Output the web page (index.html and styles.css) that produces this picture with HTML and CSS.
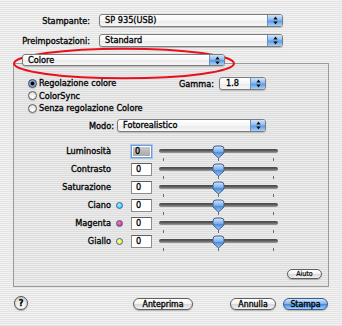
FILE: index.html
```html
<!DOCTYPE html>
<html lang="it">
<head>
<meta charset="utf-8">
<title>Stampa</title>
<link rel="stylesheet" href="styles.css">
</head>
<body>
<div class="dialog">
  <div class="field-row">
    <span class="lbl">Stampante:</span>
    <div class="popup w-printer"><span class="ptext">SP 935(USB)</span><span class="arrows"><svg width="5" height="9" viewBox="0 0 5 9"><path d="M0.3 3.6 L2.5 0.6 L4.7 3.6 Z M0.3 5.4 L4.7 5.4 L2.5 8.4 Z"/></svg></span></div>
  </div>
  <div class="field-row">
    <span class="lbl">Preimpostazioni:</span>
    <div class="popup w-printer"><span class="ptext">Standard</span><span class="arrows"><svg width="5" height="9" viewBox="0 0 5 9"><path d="M0.3 3.6 L2.5 0.6 L4.7 3.6 Z M0.3 5.4 L4.7 5.4 L2.5 8.4 Z"/></svg></span></div>
  </div>
  <div class="panel-row">
    <div class="popup w-panel"><span class="ptext">Colore</span><span class="arrows"><svg width="5" height="9" viewBox="0 0 5 9"><path d="M0.3 3.6 L2.5 0.6 L4.7 3.6 Z M0.3 5.4 L4.7 5.4 L2.5 8.4 Z"/></svg></span></div>
  </div>
  <div class="group">
    <div class="color-top">
      <div class="radios">
        <div class="radio"><span class="rb on"></span>Regolazione colore</div>
        <div class="radio"><span class="rb"></span>ColorSync</div>
        <div class="radio"><span class="rb"></span>Senza regolazione Colore</div>
      </div>
      <div class="gamma">
        <span>Gamma:</span>
        <div class="popup w-gamma"><span class="ptext">1.8</span><span class="arrows"><svg width="5" height="9" viewBox="0 0 5 9"><path d="M0.3 3.6 L2.5 0.6 L4.7 3.6 Z M0.3 5.4 L4.7 5.4 L2.5 8.4 Z"/></svg></span></div>
      </div>
    </div>
    <div class="mode-row">
      <span class="mode-lbl">Modo:</span>
      <div class="popup w-mode"><span class="ptext">Fotorealistico</span><span class="arrows"><svg width="5" height="9" viewBox="0 0 5 9"><path d="M0.3 3.6 L2.5 0.6 L4.7 3.6 Z M0.3 5.4 L4.7 5.4 L2.5 8.4 Z"/></svg></span></div>
    </div>
    <div class="sliders">
      <div class="srow"><span class="slbl">Luminosità</span><span class="dotslot"></span><span class="tf focus"><span class="sel">0</span></span><div class="slider"><span class="track"></span><span class="tick t1"></span><span class="tick t2"></span><span class="tick t3"></span><svg class="thumb" width="13" height="14" viewBox="0 0 13 14"><defs><linearGradient id="tg" x1="0" y1="0" x2="0" y2="1"><stop offset="0" stop-color="#d6e8fb"/><stop offset="0.45" stop-color="#7fb0ea"/><stop offset="0.55" stop-color="#4d8ddb"/><stop offset="1" stop-color="#a6cdf5"/></linearGradient></defs><path d="M1 4 Q1 1 4 1 L9 1 Q12 1 12 4 L12 8 L6.5 13 L1 8 Z" fill="url(#tg)" stroke="#3f5f8f" stroke-width="1"/></svg></div></div>
      <div class="srow"><span class="slbl">Contrasto</span><span class="dotslot"></span><span class="tf">0</span><div class="slider"><span class="track"></span><span class="tick t1"></span><span class="tick t2"></span><span class="tick t3"></span><svg class="thumb" width="13" height="14" viewBox="0 0 13 14"><path d="M1 4 Q1 1 4 1 L9 1 Q12 1 12 4 L12 8 L6.5 13 L1 8 Z" fill="url(#tg)" stroke="#3f5f8f" stroke-width="1"/></svg></div></div>
      <div class="srow"><span class="slbl">Saturazione</span><span class="dotslot"></span><span class="tf">0</span><div class="slider"><span class="track"></span><span class="tick t1"></span><span class="tick t2"></span><span class="tick t3"></span><svg class="thumb" width="13" height="14" viewBox="0 0 13 14"><path d="M1 4 Q1 1 4 1 L9 1 Q12 1 12 4 L12 8 L6.5 13 L1 8 Z" fill="url(#tg)" stroke="#3f5f8f" stroke-width="1"/></svg></div></div>
      <div class="srow"><span class="slbl">Ciano</span><span class="dotslot"><span class="dot cyan"></span></span><span class="tf">0</span><div class="slider"><span class="track"></span><span class="tick t1"></span><span class="tick t2"></span><span class="tick t3"></span><svg class="thumb" width="13" height="14" viewBox="0 0 13 14"><path d="M1 4 Q1 1 4 1 L9 1 Q12 1 12 4 L12 8 L6.5 13 L1 8 Z" fill="url(#tg)" stroke="#3f5f8f" stroke-width="1"/></svg></div></div>
      <div class="srow"><span class="slbl">Magenta</span><span class="dotslot"><span class="dot magenta"></span></span><span class="tf">0</span><div class="slider"><span class="track"></span><span class="tick t1"></span><span class="tick t2"></span><span class="tick t3"></span><svg class="thumb" width="13" height="14" viewBox="0 0 13 14"><path d="M1 4 Q1 1 4 1 L9 1 Q12 1 12 4 L12 8 L6.5 13 L1 8 Z" fill="url(#tg)" stroke="#3f5f8f" stroke-width="1"/></svg></div></div>
      <div class="srow"><span class="slbl">Giallo</span><span class="dotslot"><span class="dot yellow"></span></span><span class="tf">0</span><div class="slider"><span class="track"></span><span class="tick t1"></span><span class="tick t2"></span><span class="tick t3"></span><svg class="thumb" width="13" height="14" viewBox="0 0 13 14"><path d="M1 4 Q1 1 4 1 L9 1 Q12 1 12 4 L12 8 L6.5 13 L1 8 Z" fill="url(#tg)" stroke="#3f5f8f" stroke-width="1"/></svg></div></div>
    </div>
    <div class="help-row"><span class="btn small">Aiuto</span></div>
  </div>
  <div class="bottom">
    <span class="helpbtn">?</span>
    <span class="btn preview">Anteprima</span>
    <span class="btn cancel">Annulla</span>
    <span class="btn default">Stampa</span>
  </div>
  <svg class="annot" width="226" height="34" viewBox="0 0 226 34"><ellipse cx="112" cy="16.5" rx="110" ry="14.8" fill="none" stroke="#e8101c" stroke-width="2"/></svg>
</div>
</body>
</html>
```
FILE: styles.css
```css
html, body {
  margin: 0;
  padding: 0;
}
body {
  width: 342px;
  height: 326px;
  overflow: hidden;
  background: repeating-linear-gradient(to bottom, #f2f2f2 0, #f2f2f2 1px, #e3e3e3 1px, #e3e3e3 2px);
  font-family: "DejaVu Sans Condensed", "DejaVu Sans", sans-serif;
  font-stretch: condensed;
  font-size: 9.1px;
  color: #000;
  -webkit-text-stroke: 0.3px #000;
}
.dialog {
  position: relative;
  width: 342px;
  height: 326px;
  padding-top: 14px;
  box-sizing: border-box;
}
.field-row {
  display: flex;
  align-items: center;
  height: 13px;
  margin-bottom: 7px;
}
.lbl {
  width: 90px;
  text-align: right;
}
.popup {
  display: flex;
  align-items: stretch;
  box-sizing: border-box;
  height: 13px;
  border: 1px solid #7d7d7d;
  border-radius: 3px;
  background: linear-gradient(to bottom, #ffffff 0%, #f6f6f6 50%, #e9e9e9 51%, #f7f7f7 100%);
  box-shadow: 0 1px 1px rgba(0,0,0,0.2);
  overflow: hidden;
}
.ptext {
  flex: 1;
  padding-left: 5px;
  line-height: 11px;
  white-space: nowrap;
}
.arrows {
  width: 14px;
  display: flex;
  align-items: center;
  justify-content: center;
  border-left: 1px solid #6a8fc0;
  background: linear-gradient(to bottom, #d2e5fa 0%, #8dbbef 45%, #5d9be4 55%, #a8d2f8 100%);
}
.arrows svg path {
  fill: #111;
}
.w-printer {
  width: 184px;
  margin-left: 9px;
}
.panel-row {
  position: relative;
  z-index: 1;
  padding-left: 22px;
  margin-top: 2px;
}
.w-panel {
  width: 203px;
  height: 12px;
}
.w-panel .ptext {
  line-height: 10px;
}
.group {
  display: flex;
  flex-direction: column;
  box-sizing: border-box;
  width: 316px;
  height: 224px;
  margin: -3px 0 0 13px;
  border: 1px solid #9a9a9a;
  background: rgba(0,0,0,0.025);
}
.color-top {
  display: flex;
  align-items: flex-start;
  padding: 13px 0 0 14px;
}
.radios {
  width: 153px;
}
.radio {
  display: flex;
  align-items: center;
  height: 12.5px;
  white-space: nowrap;
}
.rb {
  box-sizing: border-box;
  width: 9px;
  height: 9px;
  margin-right: 2px;
  border-radius: 50%;
  border: 1px solid #5e5e5e;
  background: radial-gradient(circle at 50% 70%, #ffffff 0%, #e6e6e6 60%, #bdbdbd 100%);
  box-shadow: 0 1px 1px rgba(0,0,0,0.15);
}
.rb.on {
  border-color: #33465f;
  background: radial-gradient(circle, #000 0, #000 1.6px, #7c98c2 2.2px, #b7cbe6 100%);
}
.gamma {
  display: flex;
  align-items: center;
  margin-left: auto;
  margin-right: 62px;
}
.w-gamma {
  width: 47px;
  margin-left: 5px;
}
.w-gamma .ptext {
  padding-left: 6px;
}
.mode-row {
  display: flex;
  align-items: center;
  margin-top: 4.5px;
  padding-left: 14px;
}
.mode-lbl {
  width: 86px;
  text-align: right;
}
.w-mode {
  width: 149px;
  margin-left: 3px;
}
.sliders {
  margin-top: 12px;
  padding-left: 14px;
}
.srow {
  display: flex;
  align-items: flex-start;
  height: 18px;
}
.slbl {
  width: 83px;
  text-align: right;
  line-height: 13px;
  margin-top: 1px;
}
.dotslot {
  width: 20px;
  height: 14px;
  padding-left: 5px;
  box-sizing: border-box;
  display: flex;
  align-items: center;
}
.dot {
  box-sizing: border-box;
  width: 7px;
  height: 7px;
  border-radius: 50%;
  border: 1px solid #3e5f9c;
}
.cyan { background: radial-gradient(circle at 40% 35%, #9ff0ff, #11c3ef); }
.magenta { background: radial-gradient(circle at 40% 35%, #ff7ab8, #e0106d); }
.yellow { background: radial-gradient(circle at 40% 35%, #ffffa0, #f2ee00); }
.tf {
  box-sizing: border-box;
  width: 21px;
  height: 13px;
  margin-top: 1px;
  padding-left: 4px;
  line-height: 11px;
  background: #fff;
  border: 1px solid #8c8c8c;
  border-top-color: #5e5e5e;
}
.tf.focus {
  padding-left: 1px;
  padding-top: 1px;
  border: 1px solid #6f9bd6;
  box-shadow: 0 0 0 1px #a9c6ee;
}
.sel {
  display: block;
  width: 17px;
  height: 9px;
  line-height: 9px;
  padding-left: 2px;
  box-sizing: border-box;
  background: linear-gradient(to bottom, #c9c9c9, #a9a9a9);
}
.slider {
  position: relative;
  width: 119px;
  height: 18px;
  margin-left: 7px;
}
.track {
  position: absolute;
  left: 0;
  right: 0;
  top: 5px;
  height: 4px;
  border-radius: 2px;
  background: linear-gradient(to bottom, #444 0%, #626262 50%, #a0a0a0 100%);
}
.tick {
  position: absolute;
  top: 14px;
  width: 1px;
  height: 3px;
  background: #6c6c6c;
}
.t1 { left: 4px; }
.t2 { left: 59px; top: 13px; height: 4px; }
.t3 { left: 114px; }
.thumb {
  position: absolute;
  left: 53px;
  top: 1px;
}
.help-row {
  margin-top: auto;
  display: flex;
  justify-content: flex-end;
  padding: 0 6px 7px 0;
}
.btn {
  display: flex;
  align-items: center;
  justify-content: center;
  box-sizing: border-box;
  height: 12px;
  border: 1px solid #5f5f5f;
  border-radius: 7px;
  background: linear-gradient(to bottom, #ffffff 0%, #f3f3f3 45%, #d9d9d9 55%, #f2f2f2 100%);
  box-shadow: 0 1px 1px rgba(0,0,0,0.25);
  font-size: 8.7px;
  white-space: nowrap;
}
.small {
  width: 35px;
  height: 10px;
  font-size: 7px;
  -webkit-text-stroke: 0.2px #000;
}
.bottom {
  display: flex;
  align-items: flex-end;
  height: 14px;
  margin-top: 9px;
  padding-left: 14px;
}
.helpbtn {
  box-sizing: border-box;
  width: 14px;
  height: 14px;
  border-radius: 50%;
  border: 1px solid #555;
  background: radial-gradient(circle at 50% 75%, #ffffff 0%, #e9e9e9 50%, #b9b9b9 100%);
  box-shadow: 0 1px 1px rgba(0,0,0,0.3);
  display: flex;
  align-items: center;
  justify-content: center;
  font-weight: bold;
  font-size: 9px;
  line-height: 12px;
}
.preview { width: 60px; margin-left: 105px; }
.cancel { width: 46px; margin-left: 37px; }
.default {
  width: 45px;
  margin-left: 7px;
  border-color: #3b5c8f;
  background: linear-gradient(to bottom, #d0e5fb 0%, #86b6ee 45%, #4a8ce0 55%, #a5d2fa 100%);
}
.annot {
  position: absolute;
  left: 11.5px;
  top: 47px;
}
```
